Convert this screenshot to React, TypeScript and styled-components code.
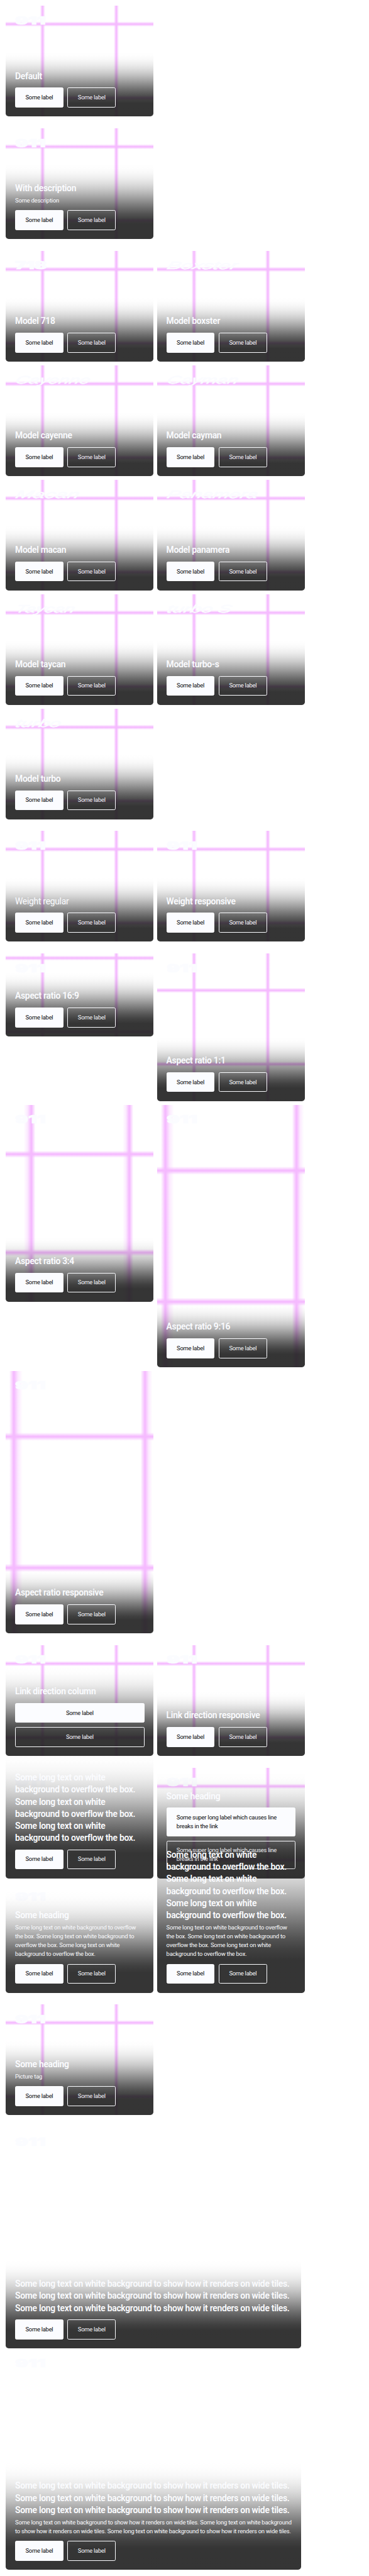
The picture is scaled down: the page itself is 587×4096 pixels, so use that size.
import React from 'react';
import styled, { createGlobalStyle, css } from 'styled-components';

// The design is specified on a 1000px wide canvas; u() converts its lengths to page pixels.
const SCALE = 0.58682;
const u = (n: number) => `${(n * SCALE).toFixed(3)}px`;

const LIGHT = '#fbfcff';
const DARK = '#010205';

const GlobalStyle = createGlobalStyle`
  *, *::before, *::after { box-sizing: border-box; }
  html, body { margin: 0; padding: 0; background: #fff; overflow-x: hidden; }
  body { font-family: Roboto, 'Liberation Sans', sans-serif; }
`;

/* ---------- tile artwork ---------- */

interface Line {
  at: number;
  before: number;
  after: number;
}

const even = (at: number, half = 7): Line => ({ at, before: half, after: half });

const tint = (a: number) => `rgba(245, 186, 255, ${a})`;

const lines = (direction: string, items: Line[]) => {
  const stops = items.flatMap(({ at, before, after }) => [
    `${tint(0)} ${u(at - before)}`,
    `${tint(before > 12 ? 0.3 : 0.52)} ${u(at - before * 0.5)}`,
    `${tint(1)} ${u(at - 0.8)}`,
    `${tint(1)} ${u(at + 0.8)}`,
    `${tint(after > 12 ? 0.3 : 0.52)} ${u(at + after * 0.5)}`,
    `${tint(0)} ${u(at + after)}`,
  ]);
  return `linear-gradient(${direction}, ${stops.join(', ')})`;
};

type Ratio = '4:3' | '16:9' | '1:1' | '3:4' | '9:16';

const height: Record<Ratio, number> = {
  '4:3': 300,
  '16:9': 225,
  '1:1': 400,
  '3:4': 533.33,
  '9:16': 711.11,
};

const artwork: Record<Ratio, string> = {
  '4:3': [lines('to right', [even(100), even(300)]), lines('to bottom', [even(50), even(250)])].join(', '),
  '16:9': [lines('to right', [even(100), even(300)]), lines('to bottom', [even(12.5), even(212.5)])].join(', '),
  '1:1': [lines('to right', [even(100), even(300)]), lines('to bottom', [even(100), even(300)])].join(', '),
  '3:4': [
    lines('to right', [
      { at: 69.7, before: 21, after: 11 },
      { at: 335.3, before: 18, after: 11 },
    ]),
    lines('to bottom', [even(133.3, 9.5), even(400, 9.5)]),
  ].join(', '),
  '9:16': [
    lines('to right', [
      { at: 22, before: 12, after: 24 },
      { at: 377.6, before: 12, after: 20 },
    ]),
    lines('to bottom', [even(177.8, 11), even(533.3, 11)]),
  ].join(', '),
};

/* ---------- layout ---------- */

const Page = styled.main`
  display: flex;
  flex-direction: column;
  gap: ${u(32)};
  width: ${u(1000)};
  padding: ${u(16)} ${u(16)} 0;
`;

const Group = styled.section<{ $columns?: number; $wide?: boolean }>`
  display: grid;
  grid-template-columns: repeat(${(p) => p.$columns ?? 1}, ${(p) => u(p.$wide ? 800 : 400)});
  gap: ${(p) => (p.$wide ? 0 : u(10))};
  align-items: start;
`;

const TileBox = styled.article<{ $ratio: Ratio; $wide?: boolean }>`
  display: grid;
  grid-template: 100% / 100%;
  height: ${(p) => u(p.$wide ? 600 : height[p.$ratio])};

  > * {
    grid-area: 1 / 1;
    min-width: 0;
  }
`;

const Artwork = styled.div<{ $ratio: Ratio; $blank?: boolean }>`
  border-radius: ${u(8)};
  background-color: #fff;
  ${(p) => !p.$blank && css`background-image: ${artwork[p.$ratio]};`}
`;

const Header = styled.header`
  align-self: start;
  padding: ${u(24.5)} ${u(25)};
  line-height: 0;
`;

const Footer = styled.footer`
  align-self: end;
  display: flex;
  flex-direction: column;
  gap: ${u(14.5)};
  padding: ${u(50.5)} ${u(24.5)} ${u(24.5)} ${u(25)};
  border-radius: 0 0 ${u(8)} ${u(8)};
  color: ${LIGHT};
  background: linear-gradient(
    to top,
    rgba(31, 31, 31, 0.9) 20%,
    rgba(31, 31, 31, 0.8526) 26.67%,
    rgba(31, 31, 31, 0.7682) 33.33%,
    rgba(31, 31, 31, 0.6681) 40%,
    rgba(31, 31, 31, 0.5573) 46.67%,
    rgba(31, 31, 31, 0.4427) 53.33%,
    rgba(31, 31, 31, 0.3319) 60%,
    rgba(31, 31, 31, 0.2318) 66.67%,
    rgba(31, 31, 31, 0.1474) 73.33%,
    rgba(31, 31, 31, 0.0817) 80%,
    rgba(31, 31, 31, 0.0355) 86.67%,
    rgba(31, 31, 31, 0.0086) 93.33%,
    rgba(31, 31, 31, 0) 100%
  );
`;

const Texts = styled.div`
  display: flex;
  flex-direction: column;
  gap: ${u(4.7)};
`;

const Title = styled.h2<{ $regular?: boolean }>`
  margin: 0;
  font-size: ${u(23.66)};
  font-weight: ${(p) => (p.$regular ? 400 : 600)};
  line-height: ${u(32.65)};
  letter-spacing: -0.02em;
  white-space: pre;
`;

const Description = styled.p`
  margin: 0;
  font-size: ${u(16)};
  line-height: ${u(24)};
  letter-spacing: -0.02em;
  white-space: pre;
`;

const Links = styled.div<{ $column?: boolean }>`
  display: flex;
  flex-direction: ${(p) => (p.$column ? 'column' : 'row')};
  gap: ${u(11)};
`;

const Link = styled.a<{ $primary?: boolean; $wrapped?: boolean }>`
  flex: none;
  min-width: ${u(131)};
  padding: ${u(13.3)} ${u(26)};
  border: ${u(2)} solid ${LIGHT};
  border-radius: ${u(4)};
  background: ${(p) => (p.$primary ? LIGHT : 'transparent')};
  color: ${(p) => (p.$primary ? DARK : LIGHT)};
  font-size: ${u(16)};
  line-height: ${u(24)};
  letter-spacing: -0.026em;
  text-align: ${(p) => (p.$wrapped ? 'left' : 'center')};
  white-space: pre;
`;

/* ---------- model signature ---------- */

const signatures: Record<string, { text: string; width: number; block?: boolean }> = {
  '911': { text: '911', width: 83, block: true },
  '718': { text: '718', width: 86, block: true },
  boxster: { text: 'Boxster', width: 190 },
  cayenne: { text: 'Cayenne', width: 201 },
  cayman: { text: 'Cayman', width: 192 },
  macan: { text: 'Macan', width: 172 },
  panamera: { text: 'Panamera', width: 245 },
  taycan: { text: 'Taycan', width: 160 },
  'turbo-s': { text: 'turbo S', width: 174 },
  turbo: { text: 'turbo', width: 122 },
};

const SignatureSvg = styled.svg`
  height: ${u(36)};
  overflow: visible;
  fill: ${LIGHT};
  stroke: ${LIGHT};
`;

const Signature = ({ model }: { model: string }) => {
  const { text, width, block } = signatures[model];
  return (
    <SignatureSvg viewBox={`0 0 ${width} 36`} aria-label={text}>
      <text
        x={block ? 0 : 4}
        y={25}
        textLength={width}
        lengthAdjust="spacingAndGlyphs"
        fontFamily={block ? 'Inter, sans-serif' : "'Liberation Sans', sans-serif"}
        fontWeight={block ? 900 : 400}
        fontStyle={block ? 'normal' : 'italic'}
        fontSize={30}
        strokeWidth={block ? 1.2 : 0.8}
        transform={block ? undefined : 'translate(4 0) skewX(-20)'}
      >
        {text}
      </text>
    </SignatureSvg>
  );
};

/* ---------- tile ---------- */

interface TileProps {
  title: string;
  description?: string;
  model?: string;
  ratio?: Ratio;
  label?: string;
  column?: boolean;
  regular?: boolean;
  blank?: boolean;
  wide?: boolean;
}

const Tile = ({
  title,
  description,
  model = '911',
  ratio = '4:3',
  label = 'Some label',
  column,
  regular,
  blank,
  wide,
}: TileProps) => {
  const wrapped = label.includes('\n');
  return (
    <TileBox $ratio={ratio} $wide={wide}>
      <Artwork $ratio={ratio} $blank={blank} />
      <Header>
        <Signature model={model} />
      </Header>
      <Footer>
        <Texts>
          <Title $regular={regular}>{title}</Title>
          {description && <Description>{description}</Description>}
        </Texts>
        <Links $column={column}>
          <Link $primary $wrapped={wrapped}>{label}</Link>
          <Link $wrapped={wrapped}>{label}</Link>
        </Links>
      </Footer>
    </TileBox>
  );
};

const models = ['718', 'boxster', 'cayenne', 'cayman', 'macan', 'panamera', 'taycan', 'turbo-s', 'turbo'];

const repeat = (text: string) => [text, text, text].join('\n');

const longTitle = repeat('Some long text on white\nbackground to overflow the box.');
const longDescription = [
  'Some long text on white background to overflow',
  'the box. Some long text on white background to',
  'overflow the box. Some long text on white',
  'background to overflow the box.',
].join('\n');
const longLabel = 'Some super long label which causes line\nbreaks in the link';
const wideTitle = repeat('Some long text on white background to show how it renders on wide tiles.');
const wideDescription = [
  'Some long text on white background to show how it renders on wide tiles. Some long text on white background',
  'to show how it renders on wide tiles. Some long text on white background to show how it renders on wide tiles.',
].join('\n');

export default function App() {
  return (
    <>
      <GlobalStyle />
      <Page>
        <Group>
          <Tile title="Default" />
        </Group>
        <Group>
          <Tile title="With description" description="Some description" />
        </Group>
        <Group $columns={2}>
          {models.map((model) => (
            <Tile key={model} model={model} title={`Model ${model}`} />
          ))}
        </Group>
        <Group $columns={2}>
          <Tile title="Weight regular" regular />
          <Tile title="Weight responsive" />
        </Group>
        <Group $columns={2}>
          <Tile title="Aspect ratio 16:9" ratio="16:9" />
          <Tile title="Aspect ratio 1:1" ratio="1:1" />
          <Tile title="Aspect ratio 3:4" ratio="3:4" />
          <Tile title="Aspect ratio 9:16" ratio="9:16" />
          <Tile title="Aspect ratio responsive" ratio="9:16" />
        </Group>
        <Group $columns={2}>
          <Tile title="Link direction column" column />
          <Tile title="Link direction responsive" />
        </Group>
        <Group $columns={2}>
          <Tile title={longTitle} blank />
          <Tile title="Some heading" label={longLabel} column />
          <Tile title="Some heading" description={longDescription} blank />
          <Tile title={longTitle} description={longDescription} blank />
        </Group>
        <Group>
          <Tile title="Some heading" description="Picture tag" />
        </Group>
        <Group $wide>
          <Tile title={wideTitle} blank wide />
          <Tile title={wideTitle} description={wideDescription} blank wide />
        </Group>
      </Page>
    </>
  );
}
